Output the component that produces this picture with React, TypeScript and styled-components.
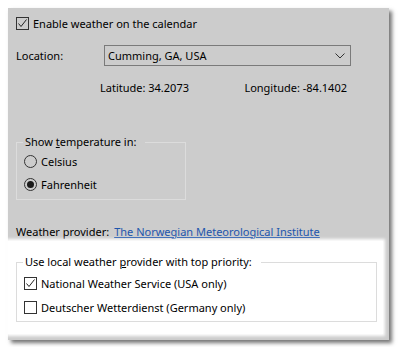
import { createGlobalStyle, styled } from 'styled-components';

const GlobalStyle = createGlobalStyle`
    html, body {
        margin: 0;
        padding: 0;
        background: #ffffff;
    }
    body {
        font-family: 'Noto Sans', 'Liberation Sans', sans-serif;
        font-size: 11px;
        color: #000;
    }
`;

const Page = styled.div`
    padding: 8px;
`;

const Panel = styled.div`
    width: 381px;
    background: #cccccc;
    box-shadow: 3px 3px 4px rgba(0, 0, 0, 0.55);
    padding: 7px 0 6px 0;
    display: flex;
    flex-direction: column;
`;

const Section = styled.div`
    padding-left: 8px;
    display: flex;
    flex-direction: column;
`;

const Highlight = styled.div`
    margin: 2px 6px 0 0;
    padding: 13px 6px 12px 8px;
    background: #ffffff;
    box-shadow: 0 0 3px 2px #ffffff;
`;

const Row = styled.label<{ $top?: number; $height?: number }>`
    display: flex;
    align-items: center;
    gap: 4px;
    height: ${(p) => p.$height ?? 16}px;
    margin-top: ${(p) => p.$top ?? 0}px;
    white-space: nowrap;
`;

const Box = styled.span`
    width: 13px;
    height: 13px;
    box-sizing: border-box;
    border: 1px solid #333333;
    display: inline-flex;
    align-items: center;
    justify-content: center;
    flex-shrink: 0;
`;

const Radio = styled(Box)<{ $on?: boolean }>`
    border-radius: 50%;
    &::after {
        content: '';
        width: 7px;
        height: 7px;
        border-radius: 50%;
        background: ${(p) => (p.$on ? '#1a1a1a' : 'transparent')};
    }
`;

const FieldLabel = styled.span`
    width: 84px;
`;

const Select = styled.div`
    width: 247px;
    height: 21px;
    box-sizing: border-box;
    border: 1px solid #7a7a7a;
    display: flex;
    align-items: center;
    justify-content: space-between;
    padding: 0 5px 0 3px;
`;

const Coords = styled.div`
    margin: 13px 0 0 84px;
    width: 247px;
    height: 16px;
    display: flex;
    align-items: center;
    justify-content: space-between;
`;

const Group = styled.fieldset<{ $width: number; $top: number; $gap: number; $bottom: number }>`
    width: ${(p) => p.$width}px;
    box-sizing: border-box;
    margin: ${(p) => p.$top}px 0 0 0;
    padding: 0 0 ${(p) => p.$bottom}px 6px;
    border: 1px solid #dcdcdc;
    display: flex;
    flex-direction: column;
    gap: ${(p) => p.$gap}px;
    min-width: 0;
`;

const Legend = styled.legend<{ $after: number }>`
    padding: 0 9px 0 2px;
    line-height: 16px;
    margin-bottom: ${(p) => p.$after}px;
`;

const Item = styled(Row)`
    height: 20px;
    margin-left: 1px;
`;

const Link = styled.a`
    color: #1d55ad;
    text-decoration: underline;
    margin-left: 1px;
`;

const Check = () => (
    <Box>
        <svg width="11" height="11" viewBox="0 0 11 11">
            <polyline
                points="1.5,5.5 4,8.5 9.5,1.5"
                fill="none"
                stroke="#222"
                strokeWidth="1"
            />
        </svg>
    </Box>
);

const Chevron = () => (
    <svg width="10" height="6" viewBox="0 0 10 6">
        <polyline points="0.5,0.5 5,5 9.5,0.5" fill="none" stroke="#333" strokeWidth="1" />
    </svg>
);

const App = () => {
    return (
        <>
            <GlobalStyle />
            <Page>
                <Panel>
                    <Section>
                        <Row>
                            <Check />
                            Enable weather on the calendar
                        </Row>
                        <Row $top={14} $height={21}>
                            <FieldLabel>Location:</FieldLabel>
                            <Select>
                                <span>Cumming, GA, USA</span>
                                <Chevron />
                            </Select>
                        </Row>
                        <Coords>
                            <span>Latitude: 34.2073</span>
                            <span>Longitude: -84.1402</span>
                        </Coords>
                        <Group $width={170} $top={39} $gap={3} $bottom={5}>
                            <Legend $after={1}>
                                Show <u>t</u>emperature in:
                            </Legend>
                            <Item>
                                <Radio />
                                Celsius
                            </Item>
                            <Item>
                                <Radio $on />
                                Fahrenheit
                            </Item>
                        </Group>
                        <Row $top={23}>
                            Weather provider:
                            <Link>The Norwegian Meteorological Institute</Link>
                        </Row>
                    </Section>
                    <Highlight>
                        <Group $width={361} $top={0} $gap={4} $bottom={4}>
                            <Legend $after={3}>
                                Use local weather <u>p</u>rovider with top priority:
                            </Legend>
                            <Item>
                                <Check />
                                National Weather Service (USA only)
                            </Item>
                            <Item>
                                <Box />
                                Deutscher Wetterdienst (Germany only)
                            </Item>
                        </Group>
                    </Highlight>
                </Panel>
            </Page>
        </>
    );
};

export default App;
